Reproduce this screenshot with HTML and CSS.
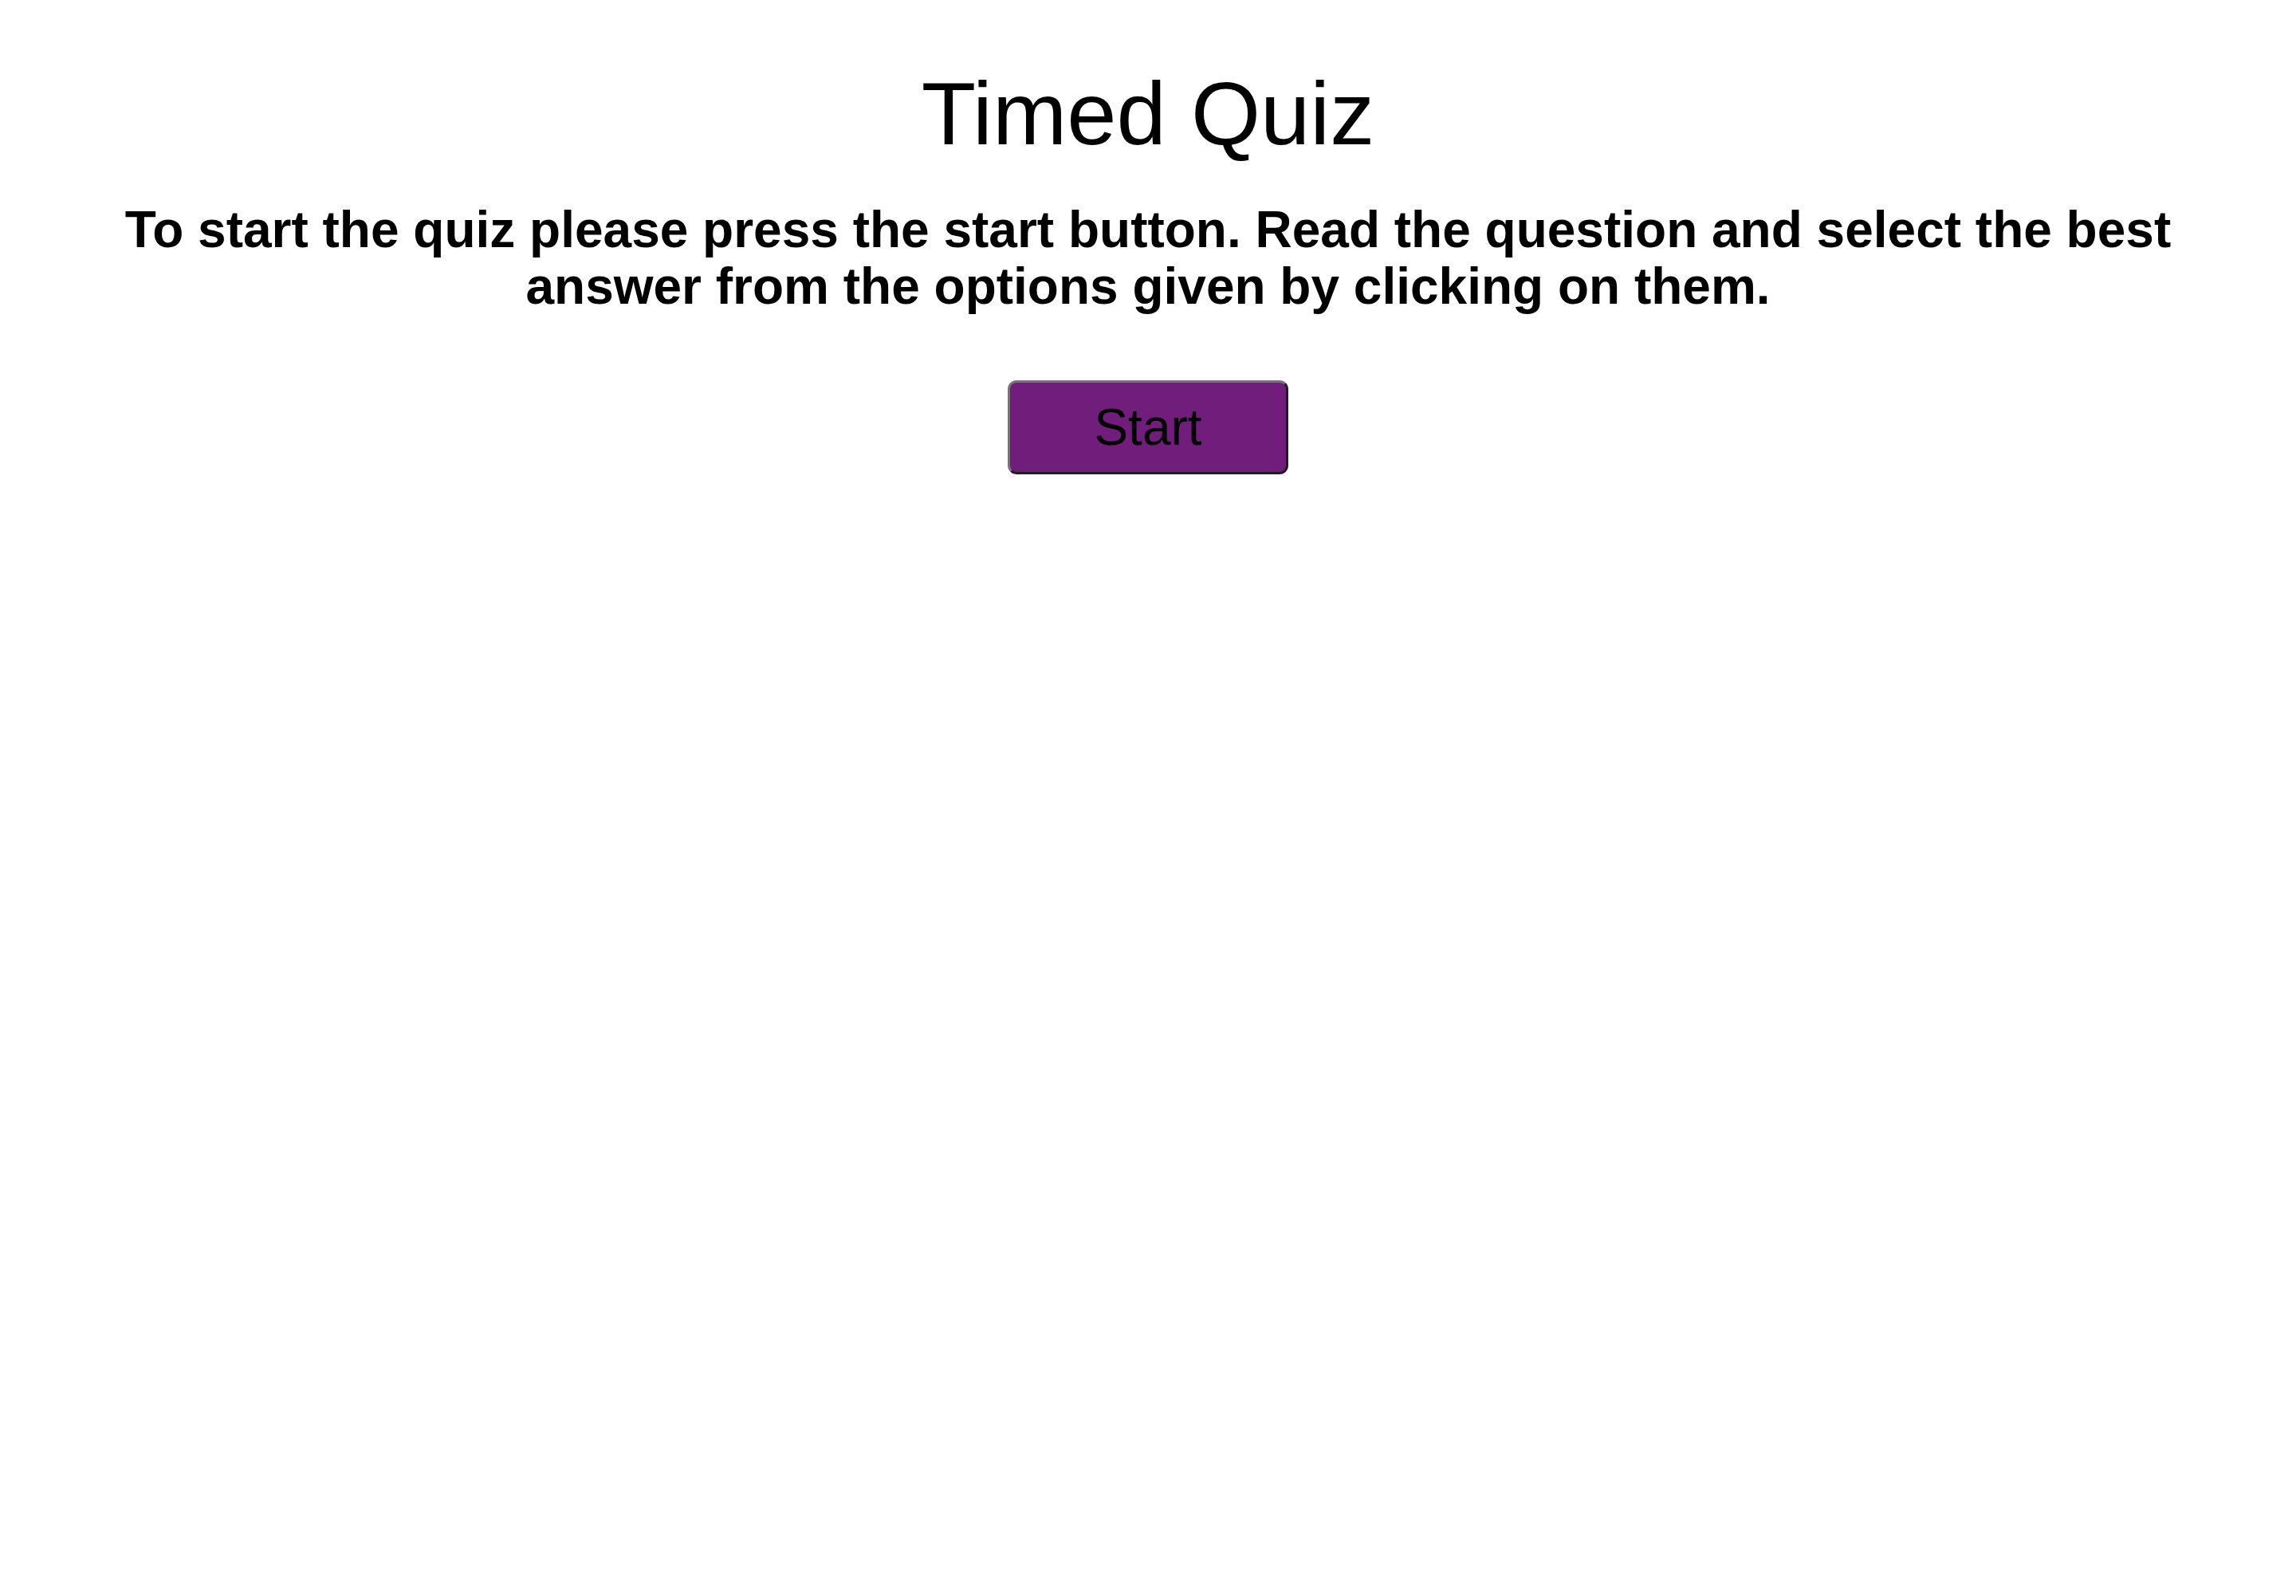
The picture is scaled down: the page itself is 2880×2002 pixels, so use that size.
FILE: index.html
```html
<!DOCTYPE html>
<html lang="en">
<head>
<meta charset="utf-8">
<title>Timed Quiz</title>
<link rel="stylesheet" href="styles.css">
</head>
<body>
<main class="intro">
  <h1 class="title">Timed Quiz</h1>
  <p class="instructions">To start the quiz please press the start button. Read the question and select the best answer from the options given by clicking on them.</p>
  <button class="start-btn" type="button">Start</button>
</main>
</body>
</html>
```
FILE: styles.css
```css
html, body {
  margin: 0;
  padding: 0;
  background: #ffffff;
}
body {
  font-family: "Liberation Sans", Arial, sans-serif;
  color: #000000;
}
.intro {
  display: flex;
  flex-direction: column;
  align-items: center;
  text-align: center;
}
.title {
  font-size: 112px;
  font-weight: 400;
  line-height: 128px;
  margin: 79px 0 0 0;
}
.instructions {
  font-size: 64px;
  font-weight: 700;
  line-height: 71px;
  margin: 46px 0 0 0;
  padding: 0 130px;
}
.start-btn {
  margin-top: 82px;
  width: 352px;
  height: 118px;
  box-sizing: border-box;
  background: #701d7c;
  border-style: solid;
  border-width: 3px;
  border-color: #767676 #1e1e1e #1e1e1e #767676;
  border-radius: 11px;
  font-family: "Liberation Sans", Arial, sans-serif;
  font-size: 64px;
  color: #000000;
  padding: 0;
  line-height: 1;
}
```
